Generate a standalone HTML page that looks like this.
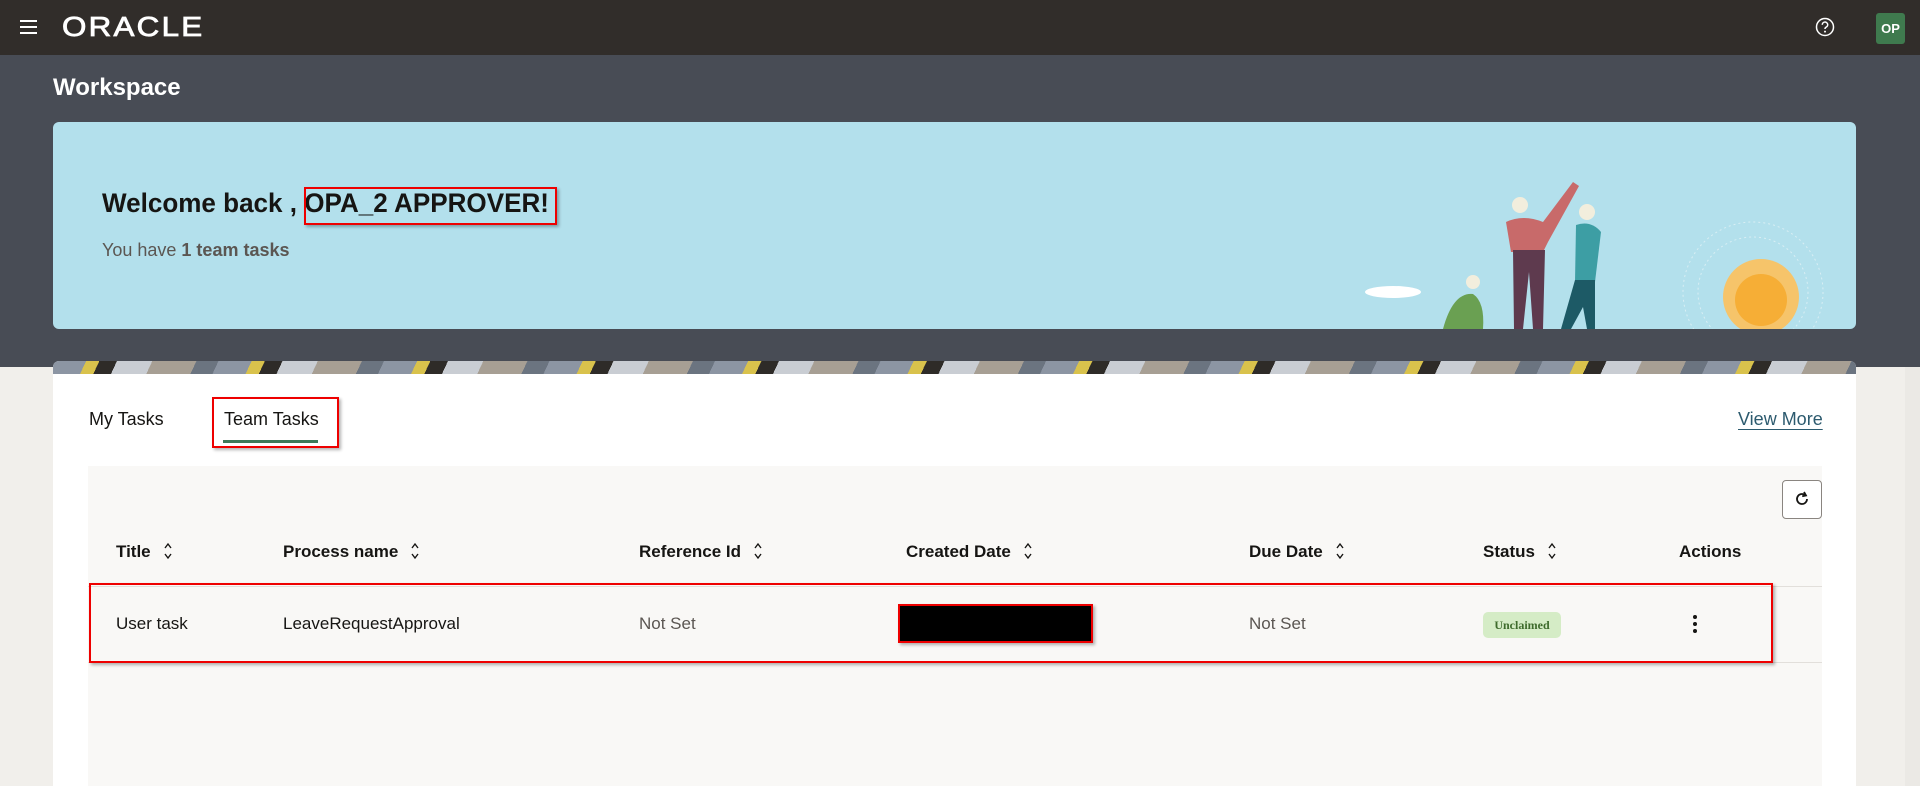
<!DOCTYPE html>
<html><head><meta charset="utf-8"><style>
*{box-sizing:border-box;margin:0;padding:0}
body{width:1920px;height:786px;overflow:hidden;background:#f1efeb;font-family:"Liberation Sans",sans-serif;position:relative}
.a{position:absolute}
.hdr{left:0;top:0;width:1920px;height:55px;background:#312d2a}
.dark{left:0;top:55px;width:1920px;height:312px;background:#484c55}
.th{font-weight:bold;font-size:17px;color:#161513;top:542px;white-space:nowrap}
.td{font-size:17px;color:#161513;top:614px}
.sort{display:inline-block;margin-left:12px;vertical-align:-3px}
</style></head><body>
<div class="a hdr"></div>
<div class="a" style="left:20px;top:20px;width:17px;height:2px;background:#fff;box-shadow:0 6px 0 #fff,0 12px 0 #fff"></div>
<div class="a" style="left:62px;top:11px;color:#fff;font-size:28px;letter-spacing:2px;transform:scaleX(1.12);transform-origin:left;-webkit-text-stroke:0.8px #fff">ORACLE</div>
<svg class="a" style="left:1815px;top:17px" width="20" height="20" viewBox="0 0 20 20"><circle cx="10" cy="10" r="8.5" fill="none" stroke="#fff" stroke-width="1.5"/><path d="M7.3 7.8a2.7 2.7 0 1 1 3.8 2.4c-.8.4-1.1.9-1.1 1.8" fill="none" stroke="#fff" stroke-width="1.5"/><circle cx="10" cy="14.6" r="1" fill="#fff"/></svg>
<div class="a" style="left:1876px;top:13px;width:29px;height:31px;background:#3f7a4e;border-radius:3px;color:#fff;font-weight:bold;font-size:13px;line-height:31px;text-align:center">OP</div>
<div class="a dark"></div>
<div class="a" style="left:53px;top:74px;color:#fff;font-size:24px;font-weight:bold">Workspace</div>
<div class="a" style="left:53px;top:122px;width:1803px;height:207px;background:#b3e0ec;border-radius:6px;overflow:hidden">
<svg class="a" style="left:1280px;top:0" width="520" height="207">
<circle cx="420" cy="170" r="70" fill="none" stroke="#d8eef4" stroke-dasharray="2 3"/>
<circle cx="420" cy="170" r="55" fill="none" stroke="#d8eef4" stroke-dasharray="2 3"/>
<circle cx="428" cy="175" r="38" fill="#f6c46a"/><circle cx="428" cy="178" r="26" fill="#f6ae36"/>
<ellipse cx="60" cy="170" rx="28" ry="6" fill="#fff"/>
<circle cx="140" cy="160" r="7" fill="#f2eedd"/><path d="M110 207 Q120 170 140 172 Q152 180 150 207Z" fill="#6aa052"/>
<circle cx="187" cy="83" r="8" fill="#f2eedd"/><path d="M173 100 Q190 92 210 100 L240 60 L246 64 L215 120 L210 130 L178 130 Z" fill="#c86a6a"/>
<path d="M180 128 L212 128 L210 207 L200 207 L196 150 L190 207 L181 207Z" fill="#5e3a4e"/>
<circle cx="254" cy="90" r="8" fill="#f2eedd"/><path d="M243 103 Q258 98 268 110 L262 160 L242 160Z" fill="#3d9ea4"/>
<path d="M242 158 L262 158 L262 207 L254 207 L250 185 L238 207 L228 207Z" fill="#1d5a66"/>
</svg>
<div class="a" style="left:49px;top:66px;font-size:27px;font-weight:bold;color:#161513;white-space:nowrap;transform:scaleX(0.965);transform-origin:left">Welcome back , OPA_2 APPROVER!</div>
<div class="a" style="left:251px;top:65px;width:253px;height:38px;border:2px solid #e00;box-shadow:2px 2px 3px rgba(0,0,0,.3)"></div>
<div class="a" style="left:49px;top:118px;font-size:18px;color:#5b5652">You have <b>1 team tasks</b></div>
</div>
<div class="a" style="left:53px;top:361px;width:1803px;height:425px;background:#fff;border-radius:6px 6px 0 0;overflow:hidden">
<div class="a" style="left:0;top:0;width:1803px;height:13px;background:repeating-linear-gradient(115deg,#8c95a3 0 30px,#d9c24c 30px 42px,#2e2b28 42px 58px,#c9cdd3 58px 90px,#a79f94 90px 130px,#6b7480 130px 150px)"></div>
</div>
<div class="a" style="left:1905px;top:367px;width:15px;height:419px;background:#ebe9e5"></div>
<div class="a" style="left:89px;top:409px;font-size:18px;color:#161513">My Tasks</div>
<div class="a" style="left:224px;top:409px;font-size:18px;color:#161513">Team Tasks</div>
<div class="a" style="left:223px;top:440px;width:95px;height:3px;background:#3d7a5a"></div>
<div class="a" style="left:212px;top:397px;width:127px;height:51px;border:2px solid #e00;box-shadow:2px 2px 3px rgba(0,0,0,.3)"></div>
<div class="a" style="left:1738px;top:409px;font-size:18px;color:#2c5a6e;text-decoration:underline;text-underline-offset:4px">View More</div>
<div class="a" style="left:88px;top:466px;width:1734px;height:320px;background:#f9f8f6"></div>
<div class="a" style="left:1782px;top:480px;width:40px;height:39px;border:1px solid #8a8580;border-radius:4px;background:#fff"></div>
<svg class="a" style="left:1793px;top:490px" width="18" height="18" viewBox="0 0 18 18"><path d="M14 9a5 5 0 1 1-2-4" fill="none" stroke="#161513" stroke-width="1.8"/><path d="M11 2l2 3.5-3.8.8" fill="none" stroke="#161513" stroke-width="1.8"/></svg>
<div class="a th" style="left:116px">Title<svg class="sort" width="10" height="18" viewBox="0 0 10 18"><path d="M2 6l3-4 3 4M2 12l3 4 3-4" fill="none" stroke="#161513" stroke-width="1.4"/></svg></div>
<div class="a th" style="left:283px">Process name<svg class="sort" width="10" height="18" viewBox="0 0 10 18"><path d="M2 6l3-4 3 4M2 12l3 4 3-4" fill="none" stroke="#161513" stroke-width="1.4"/></svg></div>
<div class="a th" style="left:639px">Reference Id<svg class="sort" width="10" height="18" viewBox="0 0 10 18"><path d="M2 6l3-4 3 4M2 12l3 4 3-4" fill="none" stroke="#161513" stroke-width="1.4"/></svg></div>
<div class="a th" style="left:906px">Created Date<svg class="sort" width="10" height="18" viewBox="0 0 10 18"><path d="M2 6l3-4 3 4M2 12l3 4 3-4" fill="none" stroke="#161513" stroke-width="1.4"/></svg></div>
<div class="a th" style="left:1249px">Due Date<svg class="sort" width="10" height="18" viewBox="0 0 10 18"><path d="M2 6l3-4 3 4M2 12l3 4 3-4" fill="none" stroke="#161513" stroke-width="1.4"/></svg></div>
<div class="a th" style="left:1483px">Status<svg class="sort" width="10" height="18" viewBox="0 0 10 18"><path d="M2 6l3-4 3 4M2 12l3 4 3-4" fill="none" stroke="#161513" stroke-width="1.4"/></svg></div>
<div class="a th" style="left:1679px">Actions</div>
<div class="a" style="left:88px;top:586px;width:1734px;height:1px;background:#e2dfdb"></div>
<div class="a" style="left:88px;top:662px;width:1734px;height:1px;background:#e2dfdb"></div>
<div class="a td" style="left:116px">User task</div>
<div class="a td" style="left:283px">LeaveRequestApproval</div>
<div class="a td" style="left:639px;color:#5b5652">Not Set</div>
<div class="a td" style="left:1249px;color:#5b5652">Not Set</div>
<div class="a" style="left:898px;top:604px;width:195px;height:39px;background:#000;border:2px solid #e00;box-shadow:2px 2px 3px rgba(0,0,0,.3)"></div>
<div class="a" style="left:1483px;top:612px;width:78px;height:26px;background:#d5ecc6;border-radius:5px;color:#3e6b2c;font:bold 12px 'Liberation Serif',serif;line-height:26px;text-align:center">Unclaimed</div>
<div class="a" style="left:1693px;top:615px;width:4px;height:4px;border-radius:2px;background:#161513;box-shadow:0 7px 0 #161513,0 14px 0 #161513"></div>
<div class="a" style="left:89px;top:583px;width:1684px;height:80px;border:2px solid #e00;box-shadow:2px 2px 3px rgba(0,0,0,.3)"></div>
</body></html>
